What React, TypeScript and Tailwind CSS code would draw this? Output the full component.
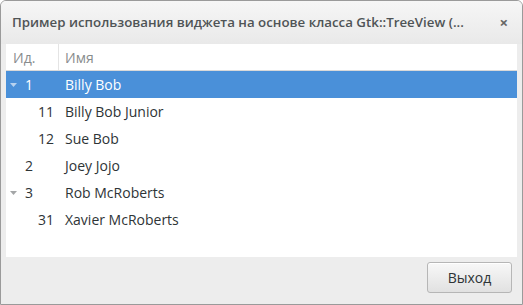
import React from "react";

type Row = { id: string; name: string; level: number; expander?: boolean; selected?: boolean };

const ROWS: Row[] = [
  { id: "1", name: "Billy Bob", level: 0, expander: true, selected: true },
  { id: "11", name: "Billy Bob Junior", level: 1 },
  { id: "12", name: "Sue Bob", level: 1 },
  { id: "2", name: "Joey Jojo", level: 0 },
  { id: "3", name: "Rob McRoberts", level: 0, expander: true },
  { id: "31", name: "Xavier McRoberts", level: 1 },
];

export default function App() {
  return (
    <div className="h-[305px] w-[523px] bg-white font-['Open_Sans','Noto_Sans',sans-serif] text-[14px]">
      <div className="flex h-[305px] w-[523px] flex-col overflow-hidden rounded-t-[6px] border border-[#9a9a9a] bg-[#ededed]">
        {/* title bar */}
        <div className="flex h-[43px] shrink-0 items-center justify-between bg-gradient-to-b from-[#f6f6f6] to-[#e9e9e9] pl-[11px] pr-[14px]">
          <span className="text-[13.3px] font-semibold text-[#4f5456]">
            Пример использования виджета на основе класса Gtk::TreeView (...
          </span>
          <span className="text-[15px] font-bold text-[#666]">×</span>
        </div>

        {/* tree view */}
        <div className="mx-[5px] h-[213px] shrink-0 bg-white">
          <div className="flex h-[27px] items-stretch border-b border-[#d9d9d9] text-[#888c8d]">
            <div className="flex w-[53px] items-center border-r border-[#e4e4e4] pl-[7px]">Ид.</div>
            <div className="flex items-center pl-[6px]">Имя</div>
          </div>
          {ROWS.map((r) => (
            <div
              key={r.id}
              className={
                r.selected
                  ? "flex h-[27px] items-center bg-[#4a90d9] text-white"
                  : "flex h-[27px] items-center text-[#2e3436]"
              }
            >
              <div className="flex w-[54px] items-center">
                <div className="flex w-[19px] pl-[4px]">
                  {r.expander && (
                    <svg width="7" height="4" viewBox="0 0 7 4">
                      <path d="M0 0 L7 0 L3.5 4 Z" fill={r.selected ? "#b7d2ef" : "#a4a6a7"} />
                    </svg>
                  )}
                </div>
                <span className={r.level === 1 ? "pl-[13px]" : "pl-[0px]"}>{r.id}</span>
              </div>
              <span className="pl-[5px]">{r.name}</span>
            </div>
          ))}
        </div>

        {/* action area */}
        <div className="flex flex-1 items-start justify-end pr-[10px] pt-[5px]">
          <button className="h-[31px] w-[85px] rounded-[3px] border border-[#b6b6b6] bg-gradient-to-b from-[#f8f8f8] to-[#e1e1e1] text-[14px] text-[#2e3436] shadow-[inset_0_1px_0_#fff]">
            Выход
          </button>
        </div>
      </div>
    </div>
  );
}
